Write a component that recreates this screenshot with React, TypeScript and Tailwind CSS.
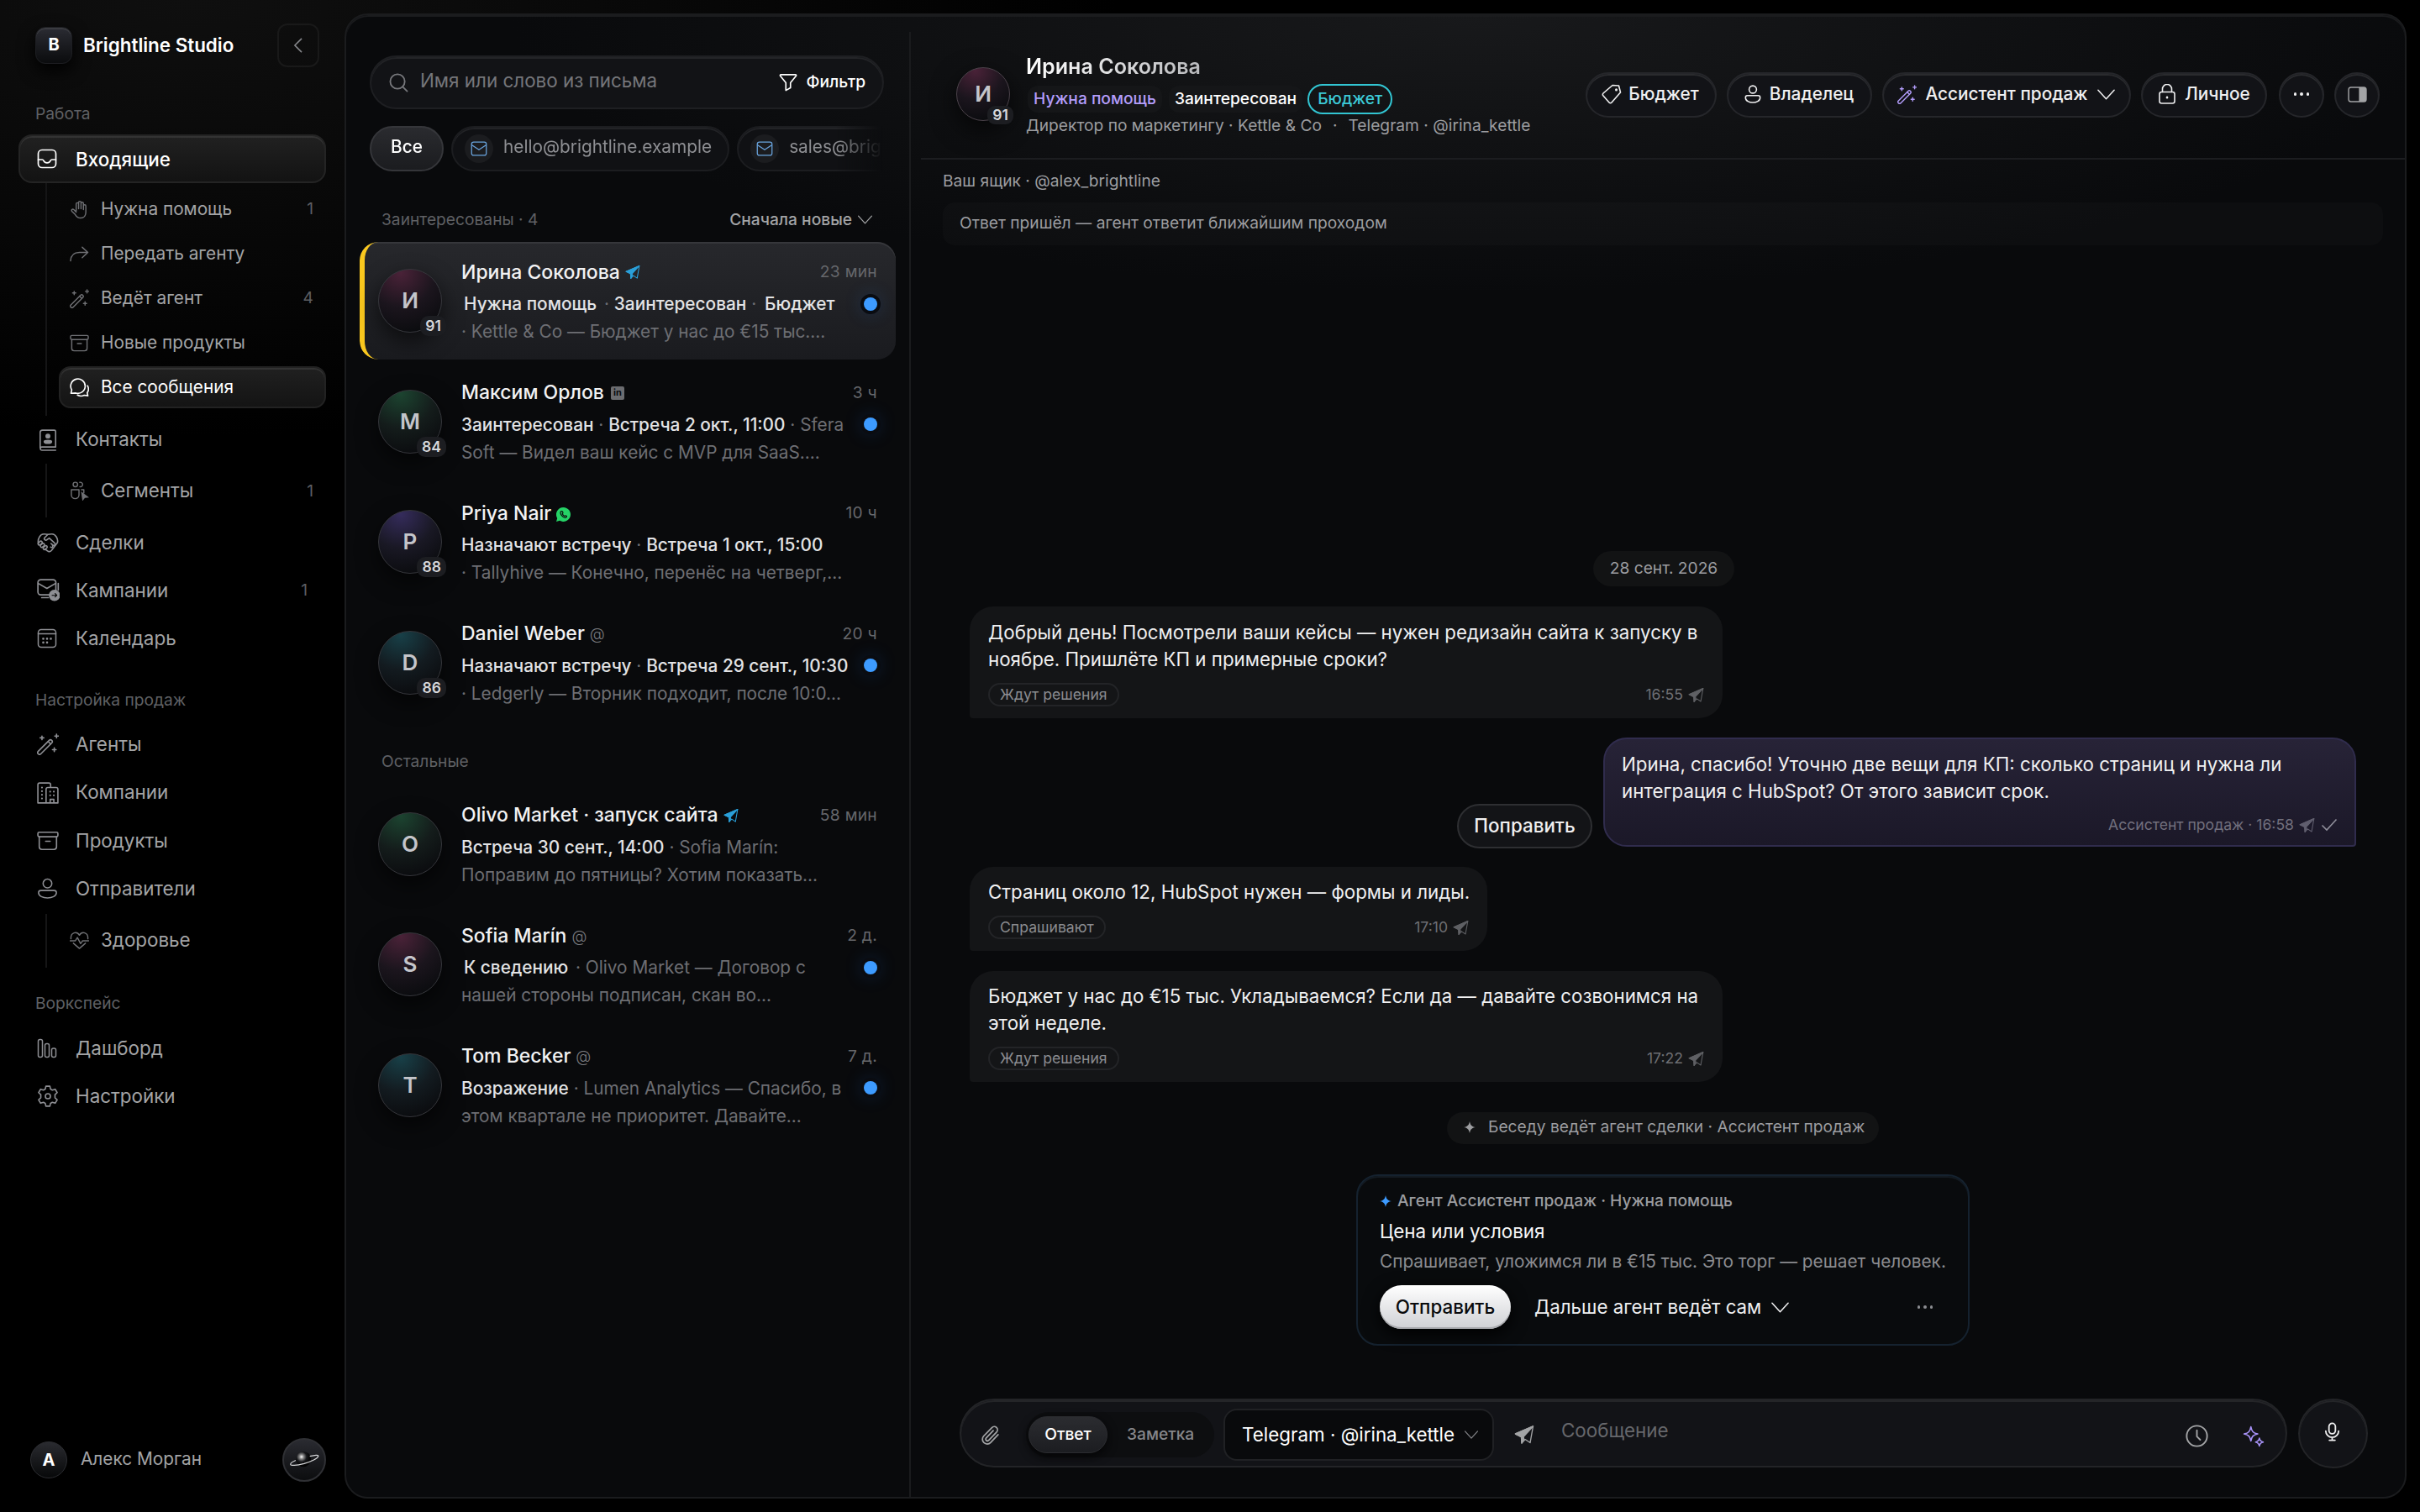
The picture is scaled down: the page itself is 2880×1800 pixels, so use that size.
import type { ReactNode } from "react";

type IconProps = { className?: string };

function Svg({ className, children, w = 1.5 }: { className?: string; children: ReactNode; w?: number }) {
  return (
    <svg
      viewBox="0 0 24 24"
      fill="none"
      stroke="currentColor"
      strokeWidth={w}
      strokeLinecap="round"
      strokeLinejoin="round"
      className={"shrink-0 " + (className || "")}
    >
      {children}
    </svg>
  );
}

const InboxIcon = ({ className }: IconProps) => (
  <Svg className={className} w={1.7}>
    <rect x="1.5" y="1.5" width="21" height="21" rx="4.5" />
    <path d="M1.5 13h4.8c.9 0 1.3.6 1.7 1.4.7 1.6 2 2.4 4 2.4s3.3-.8 4-2.4c.4-.8.8-1.4 1.7-1.4h4.8" />
  </Svg>
);

const HandIcon = ({ className }: IconProps) => (
  <Svg className={className}>
    <path d="M8 13.5V5a1.5 1.5 0 0 1 3 0v6V3.2a1.5 1.5 0 0 1 3 0V11V4.4a1.5 1.5 0 0 1 3 0V12V7.5a1.5 1.5 0 0 1 3 0v7.3c0 4.5-2.4 7.7-6.4 7.7-3.6 0-5.2-1.6-6.9-4.4L2.6 14c-1-1.9 1-3.2 2.4-2l3 3" />
  </Svg>
);

const ForwardIcon = ({ className }: IconProps) => (
  <Svg className={className}>
    <path d="M1 20.5c.4-6.6 4.5-10.500 11-10.500h10.500M15.500 3.500l7 6.500-7 6.500" />
  </Svg>
);

const WandIcon = ({ className }: IconProps) => (
  <Svg className={className}>
    <rect x="-10.5" y="-2" width="21" height="4" rx="2" transform="translate(8.8 15.2) rotate(-45)" />
    <path d="M12.3 9l2.7 2.7M5.5 3v4M3.5 5h4M21.5 1v4M19.5 3h4M19 16v4M17 18h4" />
  </Svg>
);

const ArchiveIcon = ({ className }: IconProps) => (
  <Svg className={className}>
    <rect x="1" y="2.5" width="22" height="5" rx="1.5" />
    <path d="M2.5 7.5v11a3 3 0 0 0 3 3h13a3 3 0 0 0 3-3v-11M9.5 12.5h5" />
  </Svg>
);

const ChatsIcon = ({ className }: IconProps) => (
  <Svg className={className} w={1.7}>
    <path d="M1.5 19l1-4.2A9 9 0 1 1 7.5 18.7L1.5 19z" />
    <path d="M22 9.5a8 8 0 0 1-.3 8.8l.8 3.7-4.5-.6a9 9 0 0 1-8.5-.2" />
  </Svg>
);

const ContactIcon = ({ className }: IconProps) => (
  <Svg className={className}>
    <path d="M3.5 20.5V3.5a2.5 2.5 0 0 1 2.5-2.5h13a1.5 1.5 0 0 1 1.5 1.5v17H5.5a1.8 1.8 0 0 0 0 3.6h15" />
    <circle cx="12" cy="7.5" r="2" fill="currentColor" />
    <path d="M8 13.5c0-1.5 8-1.5 8 0s-1.5 2-4 2-4-.5-4-2z" fill="currentColor" />
  </Svg>
);

const SegmentsIcon = ({ className }: IconProps) => (
  <Svg className={className}>
    <circle cx="7" cy="4" r="2.8" />
    <path d="M12.5 1.3a2.8 2.8 0 1 1 0 5.4M2 10.5h9.5V17c0 6-9.5 6-9.5 0zM14.5 10.5h3v4" />
    <path d="M14 12.5l10 7.5-5.2.6-3 3.9z" fill="currentColor" stroke="none" />
  </Svg>
);

const HandshakeIcon = ({ className }: IconProps) => (
  <Svg className={className}>
    <path d="M1.5 12.5C.5 8 3.5 2.5 7.5 2.5c2 0 3 .5 4.5.5s2.5-.5 4.5-.5c4 0 7 5.5 6 9.5L16 20.5c-1.5 1.5-3 2-4.5.5L8.5 19" />
    <path d="M12 3L8.5 6.5c-1.5 2 1 3.5 2.5 2.3L13.5 7l6 5.5c1.5 1.5-.5 3.5-2 2.2l-2-1.7M17 14.8c1.3 1.7-.8 3.2-2 2" />
    <rect x="1" y="11" width="5" height="3" rx="1.5" transform="rotate(-42 3.5 12.5)" />
    <rect x="3.5" y="13.5" width="5" height="3" rx="1.5" transform="rotate(-42 6 15)" />
    <rect x="6.5" y="16" width="5" height="3" rx="1.5" transform="rotate(-42 9 17.5)" />
  </Svg>
);

const CampaignIcon = ({ className }: IconProps) => (
  <Svg className={className}>
    <rect x="1" y="1" width="19" height="16" rx="3" />
    <path d="M1.5 5l9 5.2 9-5.2M22.5 5v7M5 20h7" />
    <circle cx="18.5" cy="17.5" r="6" fill="currentColor" stroke="none" />
    <path d="M16 17.5h5M19.2 15.7l1.8 1.8-1.8 1.8" stroke="#000" strokeWidth="1" />
  </Svg>
);

const CalendarIcon = ({ className }: IconProps) => (
  <Svg className={className}>
    <rect x="1.5" y="1.5" width="21" height="21" rx="3.5" />
    <path d="M1.5 6.5h21" />
    <path d="M7.5 12.3v.1M12 12.3v.1M16.5 12.3v.1M7.5 16.8v.1M12 16.8v.1" strokeWidth="2.6" />
  </Svg>
);

const CompaniesIcon = ({ className }: IconProps) => (
  <Svg className={className}>
    <path d="M1 23V3a2 2 0 0 1 2-2h10a2 2 0 0 1 2 2v2M1 23h22V8a2 2 0 0 0-2-2H12a2 2 0 0 0-2 2v15M14.5 23v-4h4v4" />
    <path d="M5.5 6v.1M5.5 10v.1M5.5 14v.1M5.5 18v.1M14.5 10.5v.1M18.5 10.5v.1M14.5 14.5v.1M18.5 14.5v.1" strokeWidth="2" />
  </Svg>
);

const PersonIcon = ({ className }: IconProps) => (
  <Svg className={className}>
    <circle cx="12" cy="6.5" r="5" />
    <path d="M1.8 17c0-1.6 1.2-2.5 2.7-2.5h15c1.5 0 2.7.9 2.7 2.5 0 4-5 6-10.2 6s-10.2-2-10.2-6z" />
  </Svg>
);

const HealthIcon = ({ className }: IconProps) => (
  <Svg className={className}>
    <path d="M1.5 10C.8 1.5 9 .5 12 5.5 15 .5 23.2 1.5 22.5 10M4.500 15.500L12 22l7.500-6.500M.5 12.500h6.500l2.500-4 4 7.500 2.500-3.500h7.500" />
  </Svg>
);

const BarsIcon = ({ className }: IconProps) => (
  <Svg className={className}>
    <rect x="1.5" y="1.5" width="5" height="21" rx="2" />
    <rect x="9.5" y="6.5" width="5" height="16" rx="2" />
    <rect x="17.5" y="12" width="5" height="10.5" rx="2" />
  </Svg>
);

const GearIcon = ({ className }: IconProps) => (
  <Svg className={className}>
    <path d="M9.8 1h4.4l.7 3.2 2 1.1 3.1-1 2.2 3.8-2.4 2.2v3.4l2.4 2.2-2.2 3.8-3.1-1-2 1.1-.7 3.2H9.8l-.7-3.2-2-1.1-3.1 1-2.2-3.8 2.4-2.2v-3.4L1.8 8.1 4 4.3l3.1 1 2-1.1z" />
    <circle cx="12" cy="12" r="2.8" />
  </Svg>
);

const ChevronDown = ({ className }: IconProps) => (
  <Svg className={className} w={1.6}>
    <path d="M2 6.5l10 11 10-11" />
  </Svg>
);

const SearchIcon = ({ className }: IconProps) => (
  <Svg className={className} w={1.9}>
    <circle cx="10.5" cy="10.5" r="9" />
    <path d="M17.5 17.5l5 5" />
  </Svg>
);

const FilterIcon = ({ className }: IconProps) => (
  <Svg className={className} w={1.8}>
    <path d="M2.5 2h19a1 1 0 0 1 .8 1.6L15 12.5V19l-6 3.5v-10L1.7 3.6A1 1 0 0 1 2.5 2z" />
  </Svg>
);

const MailIcon = ({ className }: IconProps) => (
  <Svg className={className}>
    <rect x="1.5" y="2.5" width="21" height="19" rx="3" />
    <path d="M2 7l10 6.5L22 7" />
  </Svg>
);

// left wing is solid, right wing is outline only
const PlaneIcon = ({ className }: IconProps) => (
  <Svg className={className} w={1.4}>
    <path d="M22.5 2L1.5 11l7 3.5L9 22l4-4.5 6 4z" />
    <path d="M22.5 2L1.5 11l7 3.5L9 22l2.500-5-.5-2.500z" fill="currentColor" />
  </Svg>
);

const TagIcon = ({ className }: IconProps) => (
  <Svg className={className} w={1.6}>
    <path d="M13 1.5l7.5.5 2 8-10.5 12a2 2 0 0 1-3 0l-7-8a2 2 0 0 1 0-3z" />
    <path d="M17.5 6.8v.1" strokeWidth="3" />
  </Svg>
);

const OwnerIcon = ({ className }: IconProps) => (
  <Svg className={className} w={1.7}>
    <circle cx="12" cy="6" r="4.8" />
    <path d="M2.5 16.5c0-1.4.9-2.5 2.4-2.5h14.2c1.5 0 2.4 1.1 2.4 2.5 0 4.5-5 6.5-9.5 6.5s-9.5-2-9.5-6.5z" />
  </Svg>
);

const LockIcon = ({ className }: IconProps) => (
  <Svg className={className} w={1.6}>
    <rect x="3" y="9.5" width="18" height="13.5" rx="2.5" />
    <path d="M6.5 9.5V6a5.5 5.5 0 0 1 11 0v3.5" />
    <path d="M12 15.8v.4" strokeWidth="2.5" />
  </Svg>
);

function Dots({ className }: IconProps) {
  return (
    <div className={"flex gap-[4px] " + (className || "")}>
      <span className="size-[3.5px] rounded-full bg-current" />
      <span className="size-[3.5px] rounded-full bg-current" />
      <span className="size-[3.5px] rounded-full bg-current" />
    </div>
  );
}

function Star({ className }: IconProps) {
  return (
    <svg viewBox="0 0 24 24" fill="currentColor" className={"shrink-0 " + (className || "")}>
      <path d="M12 0c1.5 7.5 4 10.5 12 12-8 1.5-10.5 4.5-12 12-1.5-7.5-4-10.5-12-12C8 10.5 10.5 7.5 12 0z" />
    </svg>
  );
}

function NavItem({ icon, label, count, className }: { icon: ReactNode; label: string; count?: string; className?: string }) {
  return (
    <div className={"flex h-[57.2px] items-center pl-[22px] pr-[22px] text-[#a3a4a6] " + (className || "")}>
      <span className="flex w-[46px] items-center text-[#8e8f94]">{icon}</span>
      <span className="flex-1 text-[22.4px]">{label}</span>
      {count && <span className="text-[19.2px] text-[#5d5e62]">{count}</span>}
    </div>
  );
}

function SubItem({ icon, label, count, active, big }: { icon: ReactNode; label: string; count?: string; active?: boolean; big?: boolean }) {
  return (
    <div
      className={
        active
          ? "flex h-[50px] items-center rounded-[14px] border-2 border-[#222] bg-gradient-to-b from-[#202020] to-[#141414] pl-[11px] pr-[15px] text-white shadow-[inset_0_2px_0_#333]"
          : "flex h-[50px] items-center pl-[13px] pr-[15px] text-[#a3a4a6]"
      }
    >
      <span className={active ? "flex w-[37px]" : "flex w-[37px] text-[#6f7074]"}>{icon}</span>
      <span className={big ? "flex-1 text-[22.4px]" : "flex-1 text-[20.8px]"}>{label}</span>
      {count && <span className="text-[19.2px] text-[#5d5e62]">{count}</span>}
    </div>
  );
}

function Sidebar() {
  const i = "size-[24px]";
  const s = "size-[23px]";
  return (
    <aside className="flex w-[410px] shrink-0 flex-col pl-[22px] pr-[22px]">
      <div className="mt-[28px] flex h-[52px] items-center pl-[20px] pr-[8px]">
        <div className="flex size-[44px] items-center justify-center rounded-[12px] border border-[#1d1e22] bg-gradient-to-b from-[#2b2c33] to-[#0b0c0e] pb-[2px] text-[20px] font-bold text-white shadow-[0_8px_20px_#000,inset_0_2px_0_#3a3b40]">
          B
        </div>
        <span className="ml-[13px] flex-1 text-[22.4px] font-semibold text-white">Brightline Studio</span>
        <div className="flex h-[52px] w-[50px] items-center justify-center rounded-[12px] border-2 border-[#191919] text-[#85868a]">
          <svg viewBox="0 0 12 20" className="mr-[2px] h-[18px] w-[11px]" fill="none" stroke="currentColor" strokeWidth="1.8">
            <path d="M11 1L2 10l9 9" />
          </svg>
        </div>
      </div>

      <div className="mt-[40px] flex h-[30px] items-center pl-[20px] pt-[1px] text-[19.2px] text-[#5f6064]">Работа</div>
      <div className="mt-[10px] flex h-[58px] items-center rounded-[16px] border-2 border-[#242424] bg-gradient-to-b from-[#212121] to-[#131313] pl-[20px] text-white shadow-[inset_0_2px_0_#333]">
        <span className="flex w-[46px]">
          <InboxIcon className={i} />
        </span>
        <span className="pt-[2px] text-[22.4px] font-medium">Входящие</span>
      </div>
      <div className="ml-[32px] flex h-[277px] flex-col gap-[3px] border-l-2 border-[#151516] pl-[14px] pt-[6px]">
        <SubItem icon={<HandIcon className={s} />} label="Нужна помощь" count="1" />
        <SubItem icon={<ForwardIcon className={s} />} label="Передать агенту" />
        <SubItem icon={<WandIcon className={s} />} label="Ведёт агент" count="4" />
        <SubItem icon={<ArchiveIcon className={s} />} label="Новые продукты" />
        <SubItem icon={<ChatsIcon className={s} />} label="Все сообщения" active />
      </div>
      <NavItem icon={<ContactIcon className="size-[26px]" />} label="Контакты" />
      <div className="ml-[32px] flex h-[64px] flex-col justify-center border-l-2 border-[#151516] pl-[14px]">
        <SubItem icon={<SegmentsIcon className={s} />} label="Сегменты" count="1" big />
      </div>
      <NavItem icon={<HandshakeIcon className="size-[26px]" />} label="Сделки" className="mt-[1px]" />
      <NavItem icon={<CampaignIcon className="size-[27px]" />} label="Кампании" count="1" />
      <NavItem icon={<CalendarIcon className={i} />} label="Календарь" />

      <div className="mt-[27px] flex h-[34px] items-center pl-[20px] pt-[1px] text-[19.2px] text-[#5f6064]">Настройка продаж</div>
      <NavItem icon={<WandIcon className="size-[26px]" />} label="Агенты" className="mt-[8px]" />
      <NavItem icon={<CompaniesIcon className="size-[26px]" />} label="Компании" />
      <NavItem icon={<ArchiveIcon className="size-[26px]" />} label="Продукты" />
      <NavItem icon={<PersonIcon className="size-[25px]" />} label="Отправители" />
      <div className="ml-[32px] mt-[1px] flex h-[64px] flex-col justify-center border-l-2 border-[#151516] pl-[14px]">
        <SubItem icon={<HealthIcon className={s} />} label="Здоровье" big />
      </div>

      <div className="mt-[26px] flex h-[34px] items-center pl-[20px] pt-[1px] text-[19.2px] text-[#5f6064]">Воркспейс</div>
      <NavItem icon={<BarsIcon className={i} />} label="Дашборд" className="mt-[8px]" />
      <NavItem icon={<GearIcon className="size-[26px]" />} label="Настройки" />

      <div className="mb-[36px] mt-auto flex h-[52px] items-center pl-[14px]">
        <div className="flex size-[44px] items-center justify-center rounded-full border border-[#2c2d31] bg-gradient-to-b from-[#2a2b30] to-[#08090a] text-[20px] font-bold text-white">
          А
        </div>
        <span className="ml-[16px] flex-1 pb-[2px] text-[20.8px] text-[#a3a4a6]">Алекс Морган</span>
        <div className="flex size-[52px] items-center justify-center rounded-full border-2 border-[#2f3034] bg-gradient-to-b from-[#2a2b31] to-[#0c0d0f]">
          <svg viewBox="0 0 48 48" className="size-[46px]">
            <defs>
              <radialGradient id="sphere" cx="38%" cy="35%" r="55%">
                <stop offset="0" stopColor="#fff" />
                <stop offset="0.25" stopColor="#8a8a8a" />
                <stop offset="0.6" stopColor="#16171a" />
                <stop offset="1" stopColor="#030303" />
              </radialGradient>
            </defs>
            <circle cx="23" cy="23" r="9.5" fill="url(#sphere)" />
            <path
              d="M31 19.5C37 18 42 17.3 41.5 19.5 41 22 33 26 24 28.5 14 31 7 31.5 7 29.5c0-1.5 3-3.5 6.5-5"
              fill="none"
              stroke="#d5d6d8"
              strokeWidth="1.3"
            />
          </svg>
        </div>
      </div>
    </aside>
  );
}

const tints = {
  rose: "bg-[radial-gradient(circle_at_35%_5%,#4a2238_0%,#1b151d_48%,#0b0c0f_85%)]",
  green: "bg-[radial-gradient(circle_at_35%_5%,#1c4430_0%,#141c1b_48%,#0b0c0f_85%)]",
  violet: "bg-[radial-gradient(circle_at_35%_5%,#352c5c_0%,#191824_48%,#0b0c0f_85%)]",
  teal: "bg-[radial-gradient(circle_at_35%_5%,#184048_0%,#131b20_48%,#0b0c0f_85%)]",
};

type Thread = {
  name: string;
  letter: string;
  tint: keyof typeof tints;
  score?: string;
  channel: "telegram" | "linkedin" | "whatsapp" | "mail";
  time: string;
  unread?: boolean;
  active?: boolean;
  lead: ReactNode;
  rest: string;
};

const Sep = () => <span className="text-[#6d6e73]"> · </span>;

const hot: Thread[] = [
  {
    name: "Ирина Соколова",
    letter: "И",
    tint: "rose",
    score: "91",
    channel: "telegram",
    time: "23 мин",
    unread: true,
    active: true,
    lead: (
      <>
        <b className="mx-[3px] font-medium">Нужна помощь</b>
        <Sep />
        <b className="font-medium">Заинтересован</b>
        <Sep />
        <b className="ml-[4px] font-medium">Бюджет</b>
      </>
    ),
    rest: "· Kettle & Co — Бюджет у нас до €15 тыс....",
  },
  {
    name: "Максим Орлов",
    letter: "М",
    tint: "green",
    score: "84",
    channel: "linkedin",
    time: "3 ч",
    unread: true,
    lead: (
      <>
        <b className="font-medium">Заинтересован</b>
        <Sep />
        <b className="font-medium">Встреча 2 окт., 11:00</b>
        <span className="text-[#6d6e73]"> · Sfera</span>
      </>
    ),
    rest: "Soft — Видел ваш кейс с MVP для SaaS....",
  },
  {
    name: "Priya Nair",
    letter: "P",
    tint: "violet",
    score: "88",
    channel: "whatsapp",
    time: "10 ч",
    lead: (
      <>
        <b className="font-medium">Назначают встречу</b>
        <Sep />
        <b className="font-medium">Встреча 1 окт., 15:00</b>
      </>
    ),
    rest: "· Tallyhive — Конечно, перенёс на четверг,...",
  },
  {
    name: "Daniel Weber",
    letter: "D",
    tint: "teal",
    score: "86",
    channel: "mail",
    time: "20 ч",
    unread: true,
    lead: (
      <>
        <b className="font-medium">Назначают встречу</b>
        <Sep />
        <b className="font-medium">Встреча 29 сент., 10:30</b>
      </>
    ),
    rest: "· Ledgerly — Вторник подходит, после 10:0...",
  },
];

const others: Thread[] = [
  {
    name: "Olivo Market · запуск сайта",
    letter: "O",
    tint: "green",
    channel: "telegram",
    time: "58 мин",
    lead: (
      <>
        <b className="font-medium">Встреча 30 сент., 14:00</b>
        <span className="text-[#6d6e73]"> · Sofia Marín:</span>
      </>
    ),
    rest: "Поправим до пятницы? Хотим показать...",
  },
  {
    name: "Sofia Marín",
    letter: "S",
    tint: "rose",
    channel: "mail",
    time: "2 д.",
    unread: true,
    lead: (
      <>
        <b className="mx-[3px] font-medium">К сведению</b>
        <span className="text-[#6d6e73]"> · Olivo Market — Договор с</span>
      </>
    ),
    rest: "нашей стороны подписан, скан во...",
  },
  {
    name: "Tom Becker",
    letter: "T",
    tint: "teal",
    channel: "mail",
    time: "7 д.",
    unread: true,
    lead: (
      <>
        <b className="font-medium">Возражение</b>
        <span className="text-[#6d6e73]"> · Lumen Analytics — Спасибо, в</span>
      </>
    ),
    rest: "этом квартале не приоритет. Давайте...",
  },
];

function Channel({ kind }: { kind: Thread["channel"] }) {
  if (kind === "telegram") return <PlaneIcon className="size-[18px] text-[#2a9fd8]" />;
  if (kind === "linkedin")
    return (
      <span className="ml-[2px] flex size-[16px] items-center justify-center rounded-[2px] bg-[#6b6c70] text-[11px] font-bold leading-none text-[#0a0b0d]">
        in
      </span>
    );
  if (kind === "whatsapp")
    return (
      <svg viewBox="0 0 24 24" className="mt-[2px] size-[17px]">
        <path d="M12 0a12 12 0 1 1-6 22.4L0 24l1.7-5.8A12 12 0 0 1 12 0z" fill="#25d366" />
        <path
          d="M8.5 6.5c-2 1-2 4 .5 7s5.5 4.5 7.5 3.5 1-2.5 0-3-1.5 0-2.5.8c-2-1-3-2.2-3.7-3.800.9-.8 1.200-1.300.8-2.500s-1.300-2.600-2.600-2z"
          fill="none"
          stroke="#0a0b0d"
          strokeWidth="1.7"
        />
      </svg>
    );
  return <span className="text-[18.5px] font-light text-[#7a7b7f]">@</span>;
}

function ThreadRow({ t }: { t: Thread }) {
  return (
    <div
      className={
        t.active
          ? "relative mb-[3.5px] flex h-[140px] overflow-hidden rounded-[22px] bg-gradient-to-b from-[#27282c] to-[#1a1b1f] pl-[22px] pr-[22px] shadow-[inset_0_2px_0_#36373b]"
          : "relative mb-[3.5px] flex h-[140px] pl-[22px] pr-[22px]"
      }
    >
      {t.active && <span className="absolute inset-0 rounded-[22px] border-l-[6px] border-[#fac81e]" />}
      <div
        className={
          "relative mt-[32px] flex size-[76px] shrink-0 items-center justify-center rounded-full border border-[#35363b] text-[26px] font-semibold text-[#c4c5ca] shadow-[0_10px_26px_rgba(0,0,0,0.6)] " +
          tints[t.tint]
        }
      >
        {t.letter}
        {t.score && (
          <span className="absolute -bottom-[5px] -right-[6px] flex h-[24px] items-center rounded-[10px] bg-[#1c1d21] px-[6px] text-[17.6px] font-semibold text-[#d6d7da]">
            {t.score}
          </span>
        )}
      </div>
      <div className="ml-[23px] min-w-0 flex-1 pt-[20px]">
        <div className="flex h-[32px] items-center">
          <span className="mr-[6px] text-[23px] font-medium text-[#f2f2f3]">{t.name}</span>
          <Channel kind={t.channel} />
          <span className="ml-auto text-[19.2px] tracking-[0.3px] text-[#66676b]">{t.time}</span>
        </div>
        <div className="mt-[6px] flex h-[33px] items-center whitespace-pre text-[20.8px] text-[#e2e3e5]">
          <span>{t.lead}</span>
          {t.unread && (
            <span className="ml-auto mt-[-2px] size-[16px] rounded-full bg-[#3d9bff] shadow-[0_0_0_4px_#0a0c11,0_0_22px_rgba(40,130,255,0.35)]" />
          )}
        </div>
        <div className="h-[32px] whitespace-pre text-[20.8px] leading-[31px] text-[#6d6e73]">{t.rest}</div>
      </div>
    </div>
  );
}

function Mailbox({ label }: { label: string }) {
  return (
    <div className="flex h-[54px] shrink-0 items-center rounded-full border-2 border-[#1c1d20] bg-[#101114] pl-[14px] pr-[19px] shadow-[inset_0_2px_0_#222326]">
      <span className="flex size-[34px] items-center justify-center rounded-full bg-[#1b1c1f]">
        <MailIcon className="size-[20px] text-[#6aa5e0]" />
      </span>
      <span className="ml-[12px] pb-[3px] text-[20.8px] text-[#8e8f93]">{label}</span>
    </div>
  );
}

function ThreadList() {
  return (
    <section className="flex w-[670px] shrink-0 flex-col pt-[48px]">
      <div className="ml-[28px] flex h-[64px] w-[612px] items-center rounded-full border-2 border-[#1e1f22] bg-[#121316] pl-[21px] pr-[20px] shadow-[inset_0_2px_0_#232427]">
        <SearchIcon className="size-[23px] text-[#77787c]" />
        <span className="ml-[14px] mt-[-3px] text-[22.4px] text-[#75767a]">Имя или слово из письма</span>
        <span className="ml-auto flex items-center gap-[10px] text-[19.2px] font-medium text-white">
          <FilterIcon className="size-[22px]" />
          Фильтр
        </span>
      </div>

      <div className="ml-[28px] mt-[20px] flex w-[610px] gap-[9px] overflow-hidden [mask-image:linear-gradient(to_right,#000_91%,transparent_100%)]">
        <div className="flex h-[54px] w-[88px] shrink-0 items-center justify-center rounded-full border-2 border-[#35363a] bg-gradient-to-b from-[#2a2b2f] to-[#1b1c1f] pb-[3px] text-[20.8px] font-medium text-white">
          Все
        </div>
        <Mailbox label="hello@brightline.example" />
        <Mailbox label="sales@brightline.example" />
      </div>

      <div className="ml-[42px] mr-[43px] mt-[42px] flex h-[30px] items-center">
        <span className="pt-[1px] text-[19.2px] text-[#5f6064]">Заинтересованы · 4</span>
        <span className="ml-auto pt-[1px] text-[19.2px] font-medium text-[#a3a4a6]">Сначала новые</span>
        <ChevronDown className="ml-[6px] size-[19px] text-[#a3a4a6]" />
      </div>

      <div className="ml-[16px] mt-[12px] w-[638px]">
        {hot.map((t) => (
          <ThreadRow key={t.name} t={t} />
        ))}
        <div className="mt-[33px] flex h-[30px] items-center pl-[26px] pt-[1px] text-[19.2px] text-[#5f6064]">Остальные</div>
        <div className="h-[13px]" />
        {others.map((t) => (
          <ThreadRow key={t.name} t={t} />
        ))}
      </div>
    </section>
  );
}

function HeaderButton({ children, className }: { children?: ReactNode; className: string }) {
  return (
    <div
      className={
        "flex h-[54px] shrink-0 items-center justify-center rounded-full border-2 border-[#25262a] bg-[#121317] pb-[2px] text-[20.8px] font-medium text-[#efeff0] shadow-[inset_0_2px_0_#2a2b2e] " +
        className
      }
    >
      {children}
    </div>
  );
}

function ChatHeader() {
  return (
    <header className="ml-[12px] flex h-[172px] shrink-0 border-b-2 border-[#1c1d20] pr-[30px]">
      <div className="relative ml-[42px] mt-[62px] flex size-[64px] shrink-0 items-center justify-center rounded-full border border-[#4a4149] bg-[radial-gradient(circle_at_35%_5%,#4a2238_0%,#1b151d_48%,#0b0c0f_85%)] text-[26px] font-semibold text-[#c4c5ca] shadow-[0_10px_30px_rgba(0,0,0,0.7)]">
        И
        <span className="absolute -bottom-[5px] -right-[5px] flex h-[22px] items-center rounded-[9px] bg-[#1c1d21] px-[6px] text-[17.6px] font-semibold text-[#d6d7da]">
          91
        </span>
      </div>
      <div className="ml-[19px] pt-[44px]">
        <div className="flex h-[36px]">
          <span className="bg-gradient-to-r from-white to-[#b9babd] bg-clip-text text-[25.1px] font-semibold leading-[34px] text-transparent">
            Ирина Соколова
          </span>
        </div>
        <div className="mt-[2px] flex h-[36px] items-center gap-[8px] text-[19.2px] font-medium">
          <span className="ml-[2px] flex h-[32px] items-center rounded-[12px] bg-[#151618] px-[7px] text-[#b39dfb]">Нужна помощь</span>
          <span className="flex h-[32px] items-center rounded-[12px] bg-[#151618] px-[7px] text-white">Заинтересован</span>
          <span className="ml-[-2px] flex h-[36px] items-center rounded-full border-2 border-[#32c5d2] px-[10px] text-[#3cc9d6]">Бюджет</span>
        </div>
        <div className="flex h-[28px] items-center whitespace-pre text-[19.2px] text-[#9c9da0]">
          Директор по маркетингу · Kettle & Co<span className="mx-[13px]">·</span>Telegram · @irina_kettle
        </div>
      </div>
      <div className="ml-auto flex gap-[12px] pt-[68px]">
        <HeaderButton className="w-[156px] gap-[8px] pr-[2px]">
          <TagIcon className="size-[24px]" />
          Бюджет
        </HeaderButton>
        <HeaderButton className="w-[173px] gap-[9px] pr-[2px]">
          <OwnerIcon className="size-[22px]" />
          Владелец
        </HeaderButton>
        <HeaderButton className="w-[296px] gap-[10px]">
          <WandIcon className="size-[23px] text-[#b39dfb]" />
          Ассистент продаж
          <ChevronDown className="size-[23px]" />
        </HeaderButton>
        <HeaderButton className="mr-[2px] w-[150px] gap-[9px] pr-[1px]">
          <LockIcon className="size-[24px]" />
          Личное
        </HeaderButton>
        <HeaderButton className="w-[54px] text-[#8b8c90]">
          <Dots />
        </HeaderButton>
        <HeaderButton className="w-[54px]">
          <svg viewBox="0 0 24 20" className="h-[19px] w-[23px] text-[#a3a4a6]">
            <rect x="1" y="1" width="22" height="18" rx="3" fill="none" stroke="currentColor" strokeWidth="1.5" />
            <path d="M14 1h6a3 3 0 0 1 3 3v12a3 3 0 0 1-3 3h-6z" fill="currentColor" />
          </svg>
        </HeaderButton>
      </div>
    </header>
  );
}

function Incoming({ text, tag, time, className }: { text: ReactNode; tag: string; time: string; className: string }) {
  return (
    <div className={"ml-[70px] rounded-[28px] rounded-bl-[4px] bg-[#141517] px-[22px] pt-[14px] pb-[14px] " + className}>
      <div className="whitespace-nowrap text-[22.32px] leading-[32px] text-[#f0f0f1]">{text}</div>
      <div className="mt-[12px] flex h-[28px] items-center">
        <span className="flex h-[28px] items-center rounded-full border-2 border-[#232427] px-[12px] text-[17.6px] text-[#8b8c90]">{tag}</span>
        <span className="ml-auto text-[17.6px] text-[#6d6e73]">{time}</span>
        <PlaneIcon className="ml-[6px] size-[19px] text-[#5f6064]" />
      </div>
    </div>
  );
}

function Conversation() {
  return (
    <div className="flex flex-col">
      <div className="ml-[38px] mt-[11px] flex h-[30px] items-center text-[19.2px] text-[#9c9da0]">Ваш ящик · @alex_brightline</div>
      <div className="ml-[38px] mt-[10px] flex h-[51px] w-[1714px] items-center rounded-[14px] bg-white/[0.02] pb-[2px] pl-[20px] text-[19.2px] text-[#9c9da0]">
        Ответ пришёл — агент ответит ближайшим проходом
      </div>

      <div className="ml-[812px] mt-[364px] flex h-[42px] w-[168px] items-center justify-center rounded-full bg-[#121314] text-[19.2px] text-[#9c9da0]">
        28 сент. 2026
      </div>

      <Incoming
        className="mt-[24px] w-[896px] pt-[15px]"
        text={
          <>
            Добрый день! Посмотрели ваши кейсы — нужен редизайн сайта к запуску в
            <br />
            ноябре. Пришлёте КП и примерные сроки?
          </>
        }
        tag="Ждут решения"
        time="16:55"
      />

      <div className="mt-[23px] flex items-end">
        <div className="mb-[-2px] ml-[650px] flex h-[53px] w-[161px] items-center justify-center rounded-full border-2 border-[#2e2f32] bg-[#131417] text-[22.4px] font-medium text-[#f0f0f1]">
          Поправить
        </div>
        <div className="ml-[13px] h-[130px] w-[896px] rounded-[28px] rounded-br-[4px] border-2 border-[#302c4d] bg-gradient-to-b from-[#272337] to-[#1b1828] px-[20px] pt-[14px]">
          <div className="whitespace-nowrap text-[22.32px] leading-[32px] text-[#f0f0f1]">
            Ирина, спасибо! Уточню две вещи для КП: сколько страниц и нужна ли
            <br />
            интеграция с HubSpot? От этого зависит срок.
          </div>
          <div className="mt-[10px] flex h-[28px] items-center justify-end text-[17.6px] text-[#716f7d]">
            Ассистент продаж · 16:58
            <PlaneIcon className="ml-[6px] size-[19px] text-[#605e6e]" />
            <svg viewBox="0 0 20 16" className="ml-[7px] h-[16px] w-[20px]" fill="none" stroke="#8f8e9a" strokeWidth="1.6">
              <path d="M1.5 8.5l5.5 5.5L18.5 1.5" />
            </svg>
          </div>
        </div>
      </div>

      <Incoming className="mt-[24px] w-[616px]" text="Страниц около 12, HubSpot нужен — формы и лиды." tag="Спрашивают" time="17:10" />
      <Incoming
        className="mt-[24px] w-[896px]"
        text={
          <>
            Бюджет у нас до €15 тыс. Укладываемся? Если да — давайте созвонимся на
            <br />
            этой неделе.
          </>
        }
        tag="Ждут решения"
        time="17:22"
      />

      <div className="ml-[638px] mt-[36px] flex h-[38px] w-[514px] items-center rounded-full bg-[#121314] pb-[2px] pl-[20px] text-[19.2px] text-[#9c9da0]">
        <Star className="size-[14px]" />
        <span className="ml-[15px] whitespace-nowrap">Беседу ведёт агент сделки · Ассистент продаж</span>
      </div>

      <div className="ml-[530px] mt-[36px] h-[204px] w-[730px] rounded-[26px] border-2 border-[#15222f] bg-[#090b0d] px-[26px] pt-[15px] shadow-[inset_0_2px_0_#141b22]">
        <div className="flex h-[30px] items-center text-[19.2px] font-medium text-[#9c9da0]">
          <Star className="mr-[7px] size-[14px] text-[#3d9bff]" />
          Агент Ассистент продаж · Нужна помощь
        </div>
        <div className="mt-[3px] flex h-[36px] items-center text-[22.4px] text-[#f6f6f7]">Цена или условия</div>
        <div className="flex h-[37px] items-center whitespace-nowrap text-[20.8px] text-[#8b8c90]">
          Спрашивает, уложимся ли в €15 тыс. Это торг — решает человек.
        </div>
        <div className="mt-[9px] flex h-[52px] items-center">
          <div className="flex h-[52px] w-[156px] items-center justify-center rounded-full bg-gradient-to-b from-white to-[#cfd0d4] text-[22.4px] font-medium text-[#0a0b0d] shadow-[inset_0_-2px_0_#a9aaae,0_6px_20px_#000]">
            Отправить
          </div>
          <span className="ml-[28px] text-[22.3px] text-[#f0f0f1]">Дальше агент ведёт сам</span>
          <ChevronDown className="ml-[11px] size-[23px] text-[#f0f0f1]" />
          <Dots className="ml-auto mr-[16px] text-[#8b8c90]" />
        </div>
      </div>
    </div>
  );
}

function Composer() {
  return (
    <div className="mb-[34px] ml-[58px] mt-auto flex gap-[13px]">
      <div className="flex h-[82px] w-[1580px] items-center rounded-full border-2 border-[#232427] bg-[#121317] shadow-[inset_0_2px_0_#242528]">
        <Svg className="ml-[23px] mt-[7px] size-[25px] text-[#a3a4a6]" w={1.7}>
          <path d="M20 10.5l-8.600 9a5.400 5.400 0 0 1-7.800-7.500l9.300-9.500a3.700 3.700 0 0 1 5.400 5.100l-9 9.400a2 2 0 0 1-2.900-2.800l8-8.400" />
        </Svg>
        <div className="ml-[29px] mt-[4px] flex h-[54px] w-[224px] items-center rounded-full bg-[#0d0e10] pl-[3px] text-[19.2px] font-medium">
          <span className="flex h-[44px] w-[94px] items-center justify-center rounded-full border border-[#2b2c30] bg-gradient-to-b from-[#2b2c30] to-[#1c1d21] text-white shadow-[0_4px_12px_#050506]">
            Ответ
          </span>
          <span className="ml-[23px] text-[#85868a]">Заметка</span>
        </div>
        <div className="ml-[11px] mt-[4px] flex h-[62px] w-[322px] items-center whitespace-nowrap rounded-[16px] border-2 border-[#202124] bg-[#090a0c] pl-[20px] text-[22.4px] text-white">
          Telegram · @irina_kettle
          <ChevronDown className="ml-[11px] size-[18px] text-[#85868a]" />
        </div>
        <PlaneIcon className="ml-[24px] mt-[3px] size-[24px] text-[#a3a4a6]" />
        <span className="ml-[32px] mt-[-6px] text-[22.4px] text-[#66676b]">Сообщение</span>
        <Svg className="ml-auto mt-[7px] size-[27px] text-[#a3a4a6]" w={1.7}>
          <circle cx="12" cy="12" r="10.8" />
          <path d="M12 6v6.500l3.500 3.500" />
        </Svg>
        <Svg className="ml-[41px] mr-[25px] mt-[7px] size-[26px] text-[#a893f8]">
          <path d="M9 1.5c.9 5 2.5 6.8 7.5 7.8-5 1-6.6 2.8-7.5 7.7-.9-4.9-2.5-6.7-7.5-7.7C6.5 8.3 8.1 6.5 9 1.5z" />
          <path d="M18.3 14c.5 2.6 1.4 3.6 4.2 4.2-2.8.6-3.7 1.7-4.2 4.3-.5-2.6-1.4-3.7-4.1-4.3 2.7-.6 3.6-1.6 4.1-4.2z" />
        </Svg>
      </div>
      <div className="flex size-[83px] items-center justify-center rounded-full border-2 border-[#232427] bg-[#121317] shadow-[inset_0_2px_0_#242528]">
        <Svg className="mr-[2px] mt-[-4px] size-[23px] text-[#efeff0]" w={1.9}>
          <rect x="8" y="1.5" width="8" height="13" rx="4" />
          <path d="M4 11a8 8 0 0 0 16 0M12 19v3.500M8.500 22.500h7" />
        </Svg>
      </div>
    </div>
  );
}

export default function App() {
  return (
    <div className="flex h-[1800px] w-[2880px] overflow-hidden bg-black bg-[radial-gradient(ellipse_1100px_520px_at_8%_0%,#0f0f0f_0%,#080808_50%,#000_100%)] font-['Inter',sans-serif] leading-none">
      <Sidebar />
      <div className="my-[16px] flex w-[2454px] rounded-[28px] border-2 border-[#1b1c1e] bg-[#090a0c] bg-[radial-gradient(ellipse_1150px_330px_at_55%_0%,#18191b_0%,#111214_45%,#090a0c_100%)] shadow-[inset_0_2px_0_#1b1c1e]">
        <ThreadList />
        <div className="mt-[20px] w-[2px] shrink-0 bg-[#1a1b1d]" />
        <main className="flex min-w-0 flex-1 flex-col">
          <ChatHeader />
          <Conversation />
          <Composer />
        </main>
      </div>
    </div>
  );
}
